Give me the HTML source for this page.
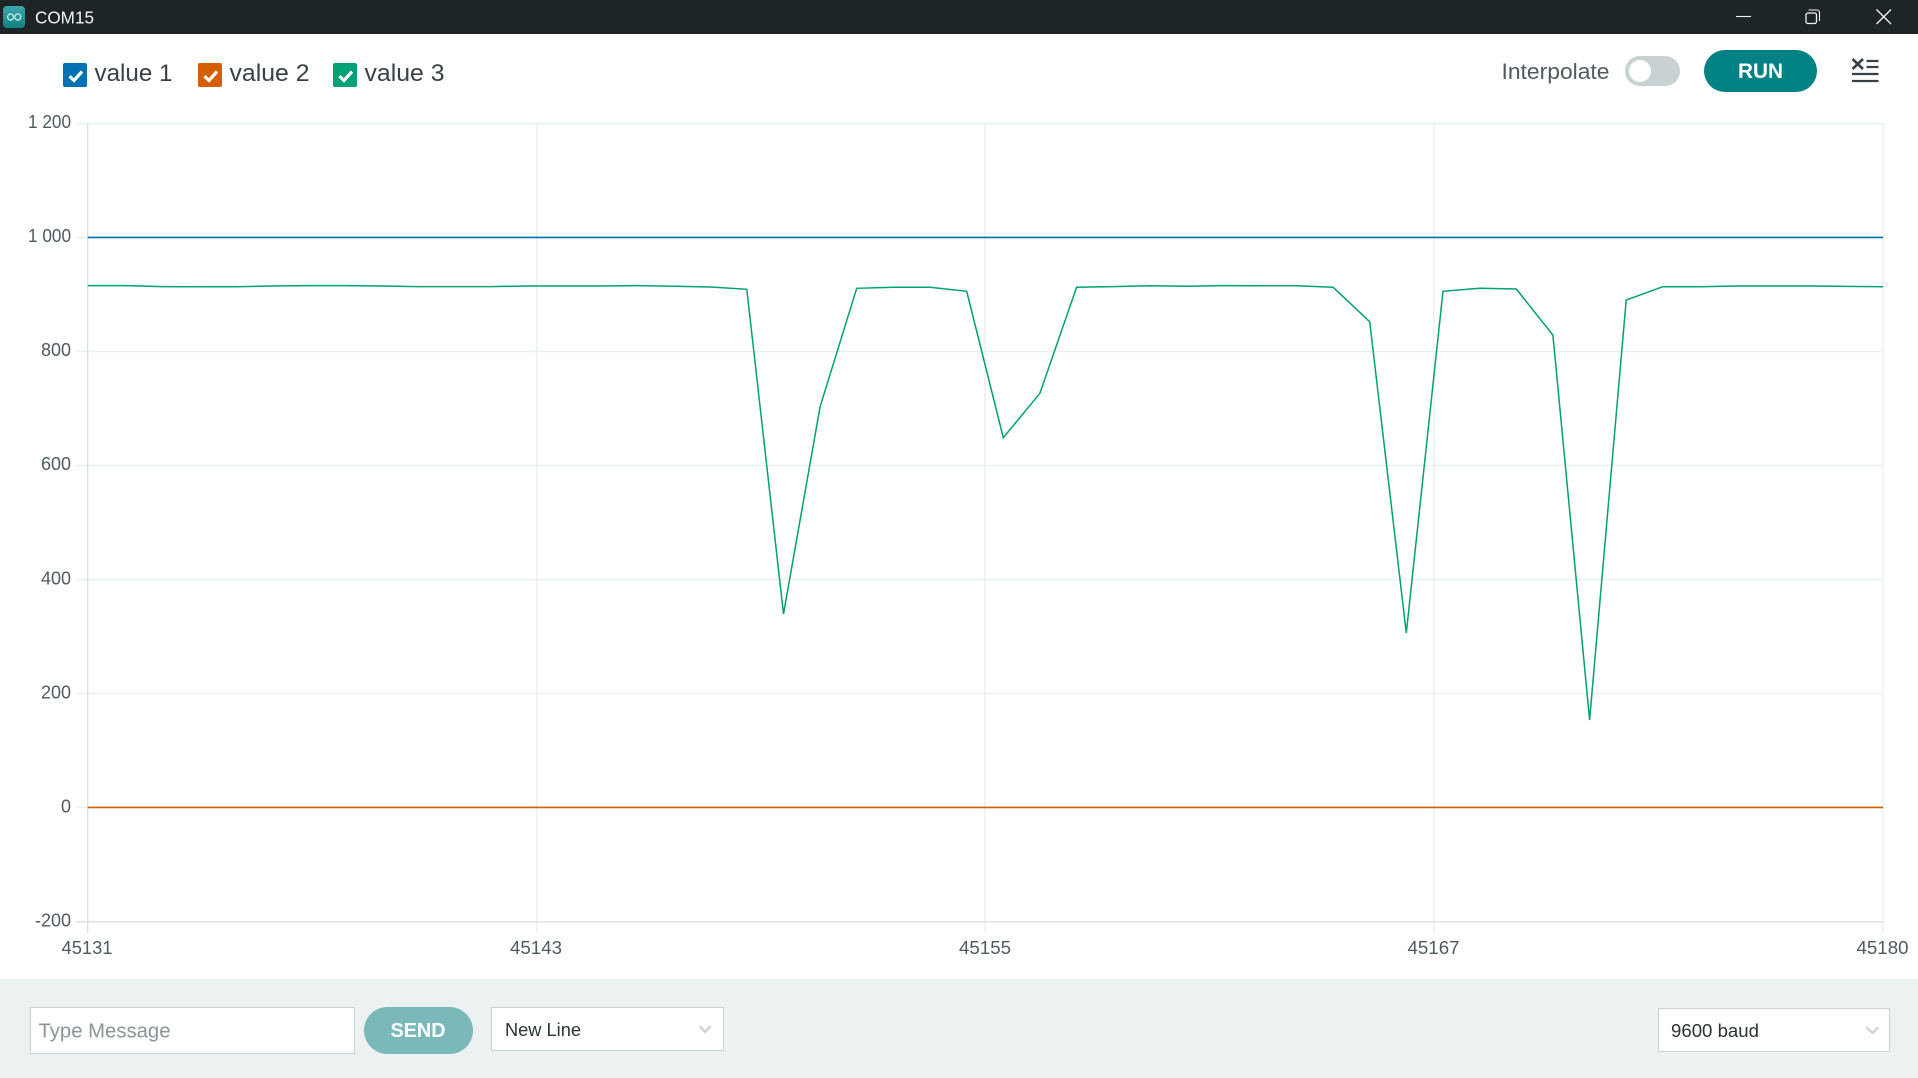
<!DOCTYPE html>
<html lang="en"><head><meta charset="utf-8"><title>COM15</title>
<style>
html,body{margin:0;padding:0;width:1918px;height:1078px;overflow:hidden;background:#fff}
svg{display:block;position:absolute;left:0;top:0}
text{font-family:"Liberation Sans",sans-serif}
</style></head><body>
<svg width="1918" height="1078" viewBox="0 0 1918 1078" xmlns="http://www.w3.org/2000/svg">
<defs><linearGradient id="lg" x1="0" y1="0" x2="0" y2="1"><stop offset="0" stop-color="#3aa9ad"/><stop offset="1" stop-color="#12807f"/></linearGradient></defs>
<!-- title bar -->
<rect x="0" y="0" width="1918" height="34" fill="#1e2526"/>
<rect x="3" y="6" width="22" height="22" rx="4" fill="url(#lg)"/>
<g fill="none" stroke="#bfe6e6" stroke-width="1.4"><circle cx="10.6" cy="17" r="3"/><circle cx="17.8" cy="17" r="3"/></g>
<text x="35" y="23.5" font-size="17.5" fill="#f4f6f6" textLength="59" lengthAdjust="spacingAndGlyphs">COM15</text>
<g fill="none" stroke="#f2f4f4" stroke-width="1.1">
<path d="M1736 16.5H1751"/>
<rect x="1806" y="13" width="10.5" height="10.5" rx="2" stroke-width="1.3"/>
<path d="M1808.5 10H1817a2.5 2.5 0 0 1 2.5 2.5V21"/>
<path d="M1876.5 9.5L1891 24M1891 9.5L1876.5 24" stroke-width="1.3"/>
</g>
<!-- legend -->
<g>
<rect x="63" y="63" width="24" height="24" rx="2" fill="#0072b4"/>
<rect x="198" y="63" width="24" height="24" rx="2" fill="#d55f00"/>
<rect x="333" y="63" width="24" height="24" rx="2" fill="#00a175"/>
<g fill="none" stroke="#fff" stroke-width="3.2">
<path d="M69.5 76.2L74 80.5L82 71.5"/><path d="M204.5 76.2L209 80.5L217 71.5"/><path d="M339.5 76.2L344 80.5L352 71.5"/>
</g>
<g font-size="24" fill="#374146">
<text x="94.5" y="81" textLength="78" lengthAdjust="spacingAndGlyphs">value 1</text>
<text x="229.5" y="81" textLength="80" lengthAdjust="spacingAndGlyphs">value 2</text>
<text x="364.5" y="81" textLength="80" lengthAdjust="spacingAndGlyphs">value 3</text>
</g>
</g>
<!-- top right controls -->
<text x="1501.5" y="79" font-size="22" fill="#4e5b61" textLength="108" lengthAdjust="spacingAndGlyphs">Interpolate</text>
<rect x="1625" y="56" width="55" height="30" rx="15" fill="#c9d2d2"/>
<circle cx="1640" cy="71" r="11" fill="#fff"/>
<rect x="1704" y="50" width="113" height="42" rx="21" fill="#008184"/>
<text x="1760.5" y="78" font-size="21" font-weight="bold" fill="#fff" text-anchor="middle" textLength="45" lengthAdjust="spacingAndGlyphs">RUN</text>
<g stroke="#374146" fill="none" stroke-width="2.2">
<path d="M1852.5 59L1863 69M1863 59L1852.5 69" stroke-width="2.6"/>
<path d="M1866.5 61H1878.5M1866.5 67H1878.5M1852 74H1878.5M1852 81H1878.5"/>
</g>
<!-- chart grid -->
<g stroke="#ebf0f0" stroke-width="1.4" fill="none">
<path d="M76 123.5H1883M76 237.5H1883M76 351.5H1883M76 465.5H1883M76 579.5H1883M76 693.5H1883M76 807.5H1883"/>
<path d="M536.6 123V933M985 123V933M1433.8 123V933M1883 123V933"/>
</g>
<path d="M87.7 123V933" stroke="#dde1e1" stroke-width="1.4" fill="none"/>
<path d="M76 921.7H1883" stroke="#dde1e1" stroke-width="1.4" fill="none"/>
<!-- y labels -->
<g font-size="18" fill="#4e5b61" text-anchor="end">
<text x="71" y="128" textLength="43" lengthAdjust="spacingAndGlyphs">1 200</text>
<text x="71" y="242" textLength="43" lengthAdjust="spacingAndGlyphs">1 000</text>
<text x="71" y="356">800</text>
<text x="71" y="470">600</text>
<text x="71" y="584.5">400</text>
<text x="71" y="698.5">200</text>
<text x="71" y="812.5">0</text>
<text x="71" y="926.5">-200</text>
</g>
<!-- x labels -->
<g font-size="18" fill="#4e5b61" text-anchor="middle">
<text x="87" y="954" textLength="51" lengthAdjust="spacingAndGlyphs">45131</text>
<text x="536" y="954" textLength="52" lengthAdjust="spacingAndGlyphs">45143</text>
<text x="985" y="954" textLength="52" lengthAdjust="spacingAndGlyphs">45155</text>
<text x="1433.5" y="954" textLength="52" lengthAdjust="spacingAndGlyphs">45167</text>
<text x="1882.5" y="954" textLength="52" lengthAdjust="spacingAndGlyphs">45180</text>
</g>
<!-- data -->
<path d="M87.7 237.4H1883" stroke="#0072b4" stroke-width="1.6" fill="none"/>
<path d="M87.7 807.4H1883" stroke="#d55f00" stroke-width="1.6" fill="none"/>
<polyline fill="none" stroke="#00a175" stroke-width="1.5" stroke-linejoin="miter" points="87.7,285.6 124.3,285.6 161,286.6 197.6,286.8 234.3,286.8 270.9,286 307.5,285.6 344.2,285.6 380.8,286 417.5,286.6 454.1,286.6 490.7,286.6 527.4,286 564,286 600.7,286 637.3,285.6 674,286.2 710.6,287 746.8,289.3 783.5,614 820.1,406.7 856.7,288.3 893.4,287.3 930,287.3 966.7,291.3 1003.3,437.7 1039.9,393.3 1076.6,287.3 1113.2,286.6 1149.9,285.8 1186.5,286.2 1223.1,285.6 1259.8,285.8 1296.4,285.8 1333.1,287.3 1369.7,321.7 1406.3,633 1443,291.3 1479.6,288.3 1516.3,289 1552.9,335 1589.6,720 1626.2,300 1662.8,286.7 1699.5,286.7 1736.1,286 1772.8,286 1809.4,286 1846,286.4 1883,286.7"/>
<!-- bottom panel -->
<rect x="0" y="979" width="1918" height="99" fill="#ecf1f1"/>
<rect x="30.5" y="1007.5" width="324" height="46" fill="#fff" stroke="#c9d2d2" stroke-width="1"/>
<text x="38.5" y="1037.5" font-size="20" fill="#8a9699" textLength="132" lengthAdjust="spacingAndGlyphs">Type Message</text>
<rect x="364" y="1007" width="109" height="47" rx="23.5" fill="#7ab8ba"/>
<text x="418" y="1037" font-size="20" font-weight="bold" fill="#fff" text-anchor="middle" textLength="55" lengthAdjust="spacingAndGlyphs">SEND</text>
<rect x="491.5" y="1007.5" width="232" height="43" fill="#fff" stroke="#c9d2d2" stroke-width="1"/>
<text x="505" y="1036" font-size="18" fill="#2b3336" textLength="76" lengthAdjust="spacingAndGlyphs">New Line</text>
<path d="M699.5 1026L705 1032L710.5 1026" fill="none" stroke="#c9d2d2" stroke-width="2.2"/>
<rect x="1658.5" y="1008.5" width="231" height="43" fill="#fff" stroke="#c9d2d2" stroke-width="1"/>
<text x="1671" y="1037" font-size="18" fill="#2b3336" textLength="88" lengthAdjust="spacingAndGlyphs">9600 baud</text>
<path d="M1866.5 1027L1872.5 1033L1878.5 1027" fill="none" stroke="#c9d2d2" stroke-width="2.2"/>
</svg>
</body></html>
